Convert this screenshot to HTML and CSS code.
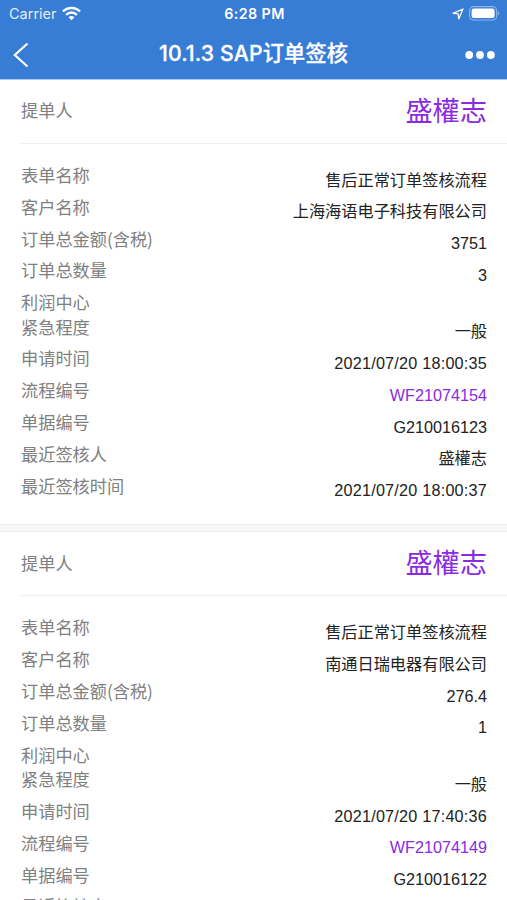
FILE: index.html
```html
<!DOCTYPE html>
<html lang="zh-CN">
<head>
    <meta charset="UTF-8">
    <meta name="viewport" content="width=device-width, initial-scale=1.0">
    <title>SAP订单签核</title>
    <link rel="stylesheet" href="styles.css">
</head>
<body>
    <header class="header">
        <div class="status-bar">
            <div class="status-left">
                <span class="carrier">Carrier</span>
                <svg width="19" height="15" viewBox="0 0 18 14" fill="none" stroke="#fff" stroke-width="2.3">
                    <path d="M0.9 5.1C5.4 0.6 12.6 0.6 17.1 5.1"/>
                    <path d="M3.9 8.2C6.8 5.4 11.2 5.4 14.1 8.2"/>
                    <path d="M9 13.5L6.2 10.5C7.7 9 10.3 9 11.8 10.5Z" fill="#fff" stroke="none"/>
                </svg>
            </div>
            <div class="time">6:28 PM</div>
            <div class="status-right">
                <svg width="12" height="12" viewBox="0 0 12 12" fill="none" stroke="#fff" stroke-width="1.3" stroke-linejoin="round">
                    <path d="M11 1L1 5.3L6.1 5.9L6.8 10.8Z"/>
                </svg>
                <svg class="battery" width="31" height="15" viewBox="0 0 31 15">
                    <rect x="0.6" y="0.6" width="27" height="13.4" rx="4" fill="none" stroke="#8fb6e9" stroke-width="1.1"/>
                    <rect x="2.6" y="2.6" width="23" height="9.4" rx="2.2" fill="#fff"/>
                    <path d="M28.8 5V9.6Q30.2 8.8 30.2 7.3T28.8 5Z" fill="#8fb6e9"/>
                </svg>
            </div>
        </div>
        <div class="nav-bar">
            <svg class="back" width="16" height="26" viewBox="0 0 16 26" fill="none" stroke="#fff" stroke-width="2.2">
                <path d="M14.5 1.5L1.8 13L14.5 24.5"/>
            </svg>
            <h1>10.1.3 SAP订单签核</h1>
            <svg class="more" width="31" height="8" viewBox="0 0 31 8" fill="#fff">
                <circle cx="4.2" cy="4" r="3.9"/>
                <circle cx="15" cy="4" r="3.9"/>
                <circle cx="25.9" cy="4" r="3.9"/>
            </svg>
        </div>
    </header>

    <main class="list">
        <section class="card">
            <div class="card-head"><span class="label">提单人</span><span class="name">盛權志</span></div>
            <div class="card-body">
                <div class="row"><span class="label">表单名称</span><span class="value">售后正常订单签核流程</span></div>
                <div class="row"><span class="label">客户名称</span><span class="value">上海海语电子科技有限公司</span></div>
                <div class="row"><span class="label">订单总金额(含税)</span><span class="value">3751</span></div>
                <div class="row"><span class="label">订单总数量</span><span class="value">3</span></div>
                <div class="row empty"><span class="label">利润中心</span></div>
                <div class="row"><span class="label">紧急程度</span><span class="value">一般</span></div>
                <div class="row"><span class="label">申请时间</span><span class="value date">2021/07/20 18:00:35</span></div>
                <div class="row"><span class="label">流程编号</span><span class="value link">WF21074154</span></div>
                <div class="row"><span class="label">单据编号</span><span class="value">G210016123</span></div>
                <div class="row"><span class="label">最近签核人</span><span class="value">盛權志</span></div>
                <div class="row"><span class="label">最近签核时间</span><span class="value date">2021/07/20 18:00:37</span></div>
            </div>
        </section>

        <section class="card">
            <div class="card-head"><span class="label">提单人</span><span class="name">盛權志</span></div>
            <div class="card-body">
                <div class="row"><span class="label">表单名称</span><span class="value">售后正常订单签核流程</span></div>
                <div class="row"><span class="label">客户名称</span><span class="value">南通日瑞电器有限公司</span></div>
                <div class="row"><span class="label">订单总金额(含税)</span><span class="value">276.4</span></div>
                <div class="row"><span class="label">订单总数量</span><span class="value">1</span></div>
                <div class="row empty"><span class="label">利润中心</span></div>
                <div class="row"><span class="label">紧急程度</span><span class="value">一般</span></div>
                <div class="row"><span class="label">申请时间</span><span class="value date">2021/07/20 17:40:36</span></div>
                <div class="row"><span class="label">流程编号</span><span class="value link">WF21074149</span></div>
                <div class="row"><span class="label">单据编号</span><span class="value">G210016122</span></div>
                <div class="row"><span class="label">最近签核人</span></div>
            </div>
        </section>
    </main>
</body>
</html>
```

FILE: styles.css
```css
* { box-sizing: border-box; }
body { margin: 0; height: 900px; overflow: hidden; display: flex; flex-direction: column; background: #f7f7f7; font-family: "Liberation Sans", "Noto Sans CJK SC", sans-serif; }
svg { display: block; }

.header { flex: none; height: 80px; background: #377cd5; border-bottom: 1px solid #a9cbf3; color: #fff; }
.status-bar { display: grid; grid-template-columns: 1fr auto 1fr; align-items: center; height: 27px; padding: 0 7px 0 9px; font-family: Inter, sans-serif; }
.status-left, .status-right { display: flex; align-items: center; }
.status-left { gap: 5px; }
.status-right { justify-content: flex-end; gap: 5px; }
.carrier { font-size: 14.5px; color: #e4eefb; }
.time { font-size: 14.3px; font-weight: 600; letter-spacing: 0.4px; }

.nav-bar { display: grid; grid-template-columns: 1fr auto 1fr; align-items: center; height: 52px; padding: 3px 11px 0 13px; }
.nav-bar h1 { margin: 0 2px 3px 0; font-family: Inter, "Noto Sans CJK SC", sans-serif; font-size: 21.2px; font-weight: 500; line-height: 30px; letter-spacing: 0.15px; -webkit-text-stroke: 0.3px #fff; }
.more { justify-self: end; }

.list { flex: 1; min-height: 0; overflow: hidden; }
.card { background: #fff; margin-bottom: 6px; padding-bottom: 18px; border-bottom: 1px solid #ececec; }
.card + .card { border-top: 1px solid #ececec; }
.card-head { display: flex; justify-content: space-between; align-items: center; height: 64px; margin-left: 20px; padding: 0 20px 0 1px; border-bottom: 1px solid #f0f0f0; }
.card-head .label { margin-bottom: 2px; }
.card-body { padding: 20px 20px 0 21px; }
.label { color: #808080; font-family: "Noto Sans CJK SC", sans-serif; font-size: 17.2px; line-height: 22.4px; }
.name { color: #8a2be2; font-size: 27.2px; line-height: 40px; }
.row { display: flex; justify-content: space-between; align-items: flex-start; height: 31.8px; }
.row.empty { height: 24.5px; }
.value { padding-top: 6.6px; color: #222; font-size: 16.2px; line-height: 18px; }
.value.date { letter-spacing: 0.22px; }
.value.link { color: #8a2be2; }
```
